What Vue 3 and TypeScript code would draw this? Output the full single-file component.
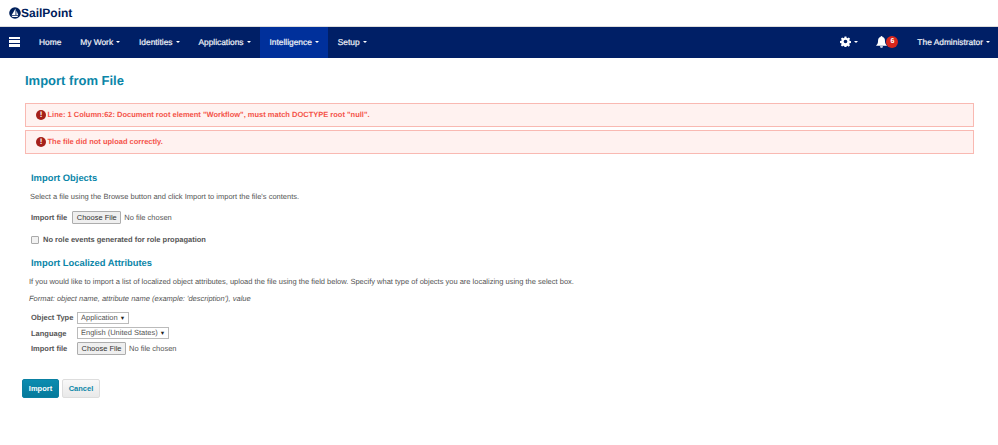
<script setup lang="ts">
interface NavItem { label: string; caret: boolean; active?: boolean }
const nav: NavItem[] = [
  { label: 'Home', caret: false },
  { label: 'My Work', caret: true },
  { label: 'Identities', caret: true },
  { label: 'Applications', caret: true },
  { label: 'Intelligence', caret: true, active: true },
  { label: 'Setup', caret: true },
]
</script>

<template>
  <div class="page">
    <header class="brand">
      <svg class="logo" width="12" height="12" viewBox="0 0 14 14">
        <circle cx="7" cy="7" r="6.800" fill="#00205b" />
        <path d="M7.600 1.800 L7.600 9.400 L3.200 9.400 Z" fill="#fff" />
        <path d="M8.600 4 L10.800 9.400 L8.600 9.400 Z" fill="#fff" />
        <path d="M2.800 10.200 H11 L9.600 11.600 H4 Z" fill="#fff" />
      </svg>
      <span class="brand-name">SailPoint</span>
    </header>
    <nav class="nav">
      <span class="burger"><i></i><i></i><i></i></span>
      <a v-for="n in nav" :key="n.label" class="nav-item" :class="{ active: n.active }">
        {{ n.label }}<b v-if="n.caret" class="caret"></b>
      </a>
      <span class="spacer"></span>
      <span class="gear">
        <svg width="11" height="11" viewBox="0 0 24 24"><path fill="#fff" d="M10 1h4l.6 3.200 1.900.8 2.700-1.800 2.800 2.800-1.800 2.700.8 1.900 3 .6v4l-3.200.6-.8 1.900 1.800 2.700-2.800 2.800-2.700-1.800-1.900.8-.6 3h-4l-.6-3.200-1.900-.8-2.700 1.800-2.800-2.800 1.800-2.700-.8-1.900-3-.6v-4l3.200-.6.8-1.900-1.800-2.700 2.800-2.800 2.700 1.800 1.900-.8zM12 8a4 4 0 1 0 0 8 4 4 0 0 0 0-8z"/></svg>
        <b class="caret"></b>
      </span>
      <span class="bell">
        <svg width="11" height="12" viewBox="0 0 22 24"><path fill="#fff" d="M11 0a2 2 0 0 1 2 2c4 1 5 4 5 9 0 4 2 6 4 8.500H0c2-2.500 4-4.500 4-8.500 0-5 1-8 5-9a2 2 0 0 1 2-2zM8 20.500h6a3 3 0 0 1-6 0z"/></svg>
        <span class="badge">6</span>
      </span>
      <a class="nav-item user">The Administrator<b class="caret"></b></a>
    </nav>

    <main class="content">
      <h1>Import from File</h1>
      <div class="alert first"><span class="err">!</span>Line: 1 Column:62: Document root element "Workflow", must match DOCTYPE root "null".</div>
      <div class="alert"><span class="err">!</span>The file did not upload correctly.</div>

      <section class="objects">
        <h2>Import Objects</h2>
        <p class="help">Select a file using the Browse button and click Import to import the file's contents.</p>
        <div class="row file-row">
          <label class="lbl">Import file</label>
          <span class="file"><button type="button" class="choose">Choose File</button><span>No file chosen</span></span>
        </div>
        <div class="check-row">
          <span class="check"></span>
          <label>No role events generated for role propagation</label>
        </div>
      </section>

      <section class="localized">
        <h2>Import Localized Attributes</h2>
        <p class="help">If you would like to import a list of localized object attributes, upload the file using the field below. Specify what type of objects you are localizing using the select box.</p>
        <p class="help format">Format: object name, attribute name (example: 'description'), value</p>
        <div class="grid">
          <label class="lbl">Object Type</label>
          <span class="select">Application <small>▼</small></span>
          <label class="lbl">Language</label>
          <span class="select">English (United States) <small>▼</small></span>
          <label class="lbl">Import file</label>
          <span class="file"><button type="button" class="choose">Choose File</button><span>No file chosen</span></span>
        </div>
      </section>

      <div class="actions">
        <button type="button" class="btn primary">Import</button>
        <button type="button" class="btn">Cancel</button>
      </div>
    </main>
  </div>
</template>

<style scoped>
.page { width: 998px; height: 445px; overflow: hidden; background: #fff; font-family: "Liberation Sans", Arial, sans-serif; font-size: 7.500px; color: #555; text-rendering: geometricPrecision; }
.brand { height: 26px; display: flex; align-items: center; padding-left: 9px; border-bottom: 1px solid #ddd; box-sizing: content-box; }
.brand-name { font-size: 12px; font-weight: 700; color: #00205b; }
.nav { height: 31px; background: #001f66; display: flex; align-items: stretch; color: #fff; }
.burger { width: 39px; display: flex; flex-direction: column; justify-content: center; gap: 1.250px; padding: 0 0 2px 9px; box-sizing: border-box; }
.burger i { display: block; width: 11px; height: 2.500px; background: #fff; }
.nav-item { display: flex; align-items: center; padding: 0 9.450px 2px; font-size: 8.400px; -webkit-text-stroke: .2px #f0f3f8; color: #f0f3f8; }
.nav-item:first-of-type { padding-left: 0; }
.nav-item.active { background: #00309b; }
.caret { display: inline-block; margin-left: 3px; border-top: 2.500px solid #fff; border-left: 2.500px solid transparent; border-right: 2.500px solid transparent; }
.spacer { flex: 1; }
.gear { display: flex; align-items: center; margin-right: 18px; padding-bottom: 2px; }
.bell { display: flex; align-items: center; margin-right: 19px; padding-bottom: 2px; }
.badge { width: 12px; height: 12px; border-radius: 50%; background: #d9261c; font-size: 7px; font-weight: 700; text-align: center; line-height: 12px; margin-left: -1px; }
.nav-item.user { padding: 0 8px 2px 0; }
.content { padding: 0 24px 0 25px; }
h1 { margin: 15px 0 15px; font-size: 13px; line-height: 15px; font-weight: 700; color: #0b86a8; }
.alert { height: 24px; box-sizing: border-box; border: 1px solid #f9b9b2; background: #fff2f0; color: #f4544a; font-weight: 700; font-size: 7.500px; display: flex; align-items: center; padding: 0 0 1px 10px; margin-bottom: 3px; }
.err { width: 10px; height: 10px; border-radius: 50%; background: #a5201a; color: #fff; font-size: 8px; line-height: 10px; text-align: center; margin-right: 1.500px; }
h2 { margin: 0; font-size: 9.400px; line-height: 12px; font-weight: 700; color: #0b86a8; padding-left: 6px; }
.objects { margin-top: 18px; }
.help { margin: 8px 0 0 5px; font-size: 7.500px; line-height: 10px; color: #555; }
.row { display: flex; align-items: center; }
.file-row { margin-top: 9px; padding-left: 6px; }
.lbl { font-weight: 700; color: #555; font-size: 7.500px; white-space: nowrap; }
.file { display: inline-flex; align-items: center; gap: 3px; font-size: 7.500px; color: #555; }
.file-row .file { margin-left: 5px; }
.choose { height: 13px; width: 49px; padding: 0; border: 1px solid #adadad; border-radius: 1px; background: #efefef; font: 7.500px "Liberation Sans", Arial, sans-serif; color: #333; }
.check-row { display: flex; align-items: center; margin-top: 11px; padding-left: 6px; font-weight: 700; font-size: 7.500px; }
.check { width: 6px; height: 6px; border: 1px solid #aaa; border-radius: 1px; background: #f2f2f2; margin-right: 4px; }
.localized { margin-top: 13px; }
.localized .help { margin-left: 4px; }
.format { font-style: italic; margin-top: 7px !important; }
.grid { display: grid; grid-template-columns: 46px max-content; grid-auto-rows: 15.500px; justify-content: start; align-items: center; margin-top: 6px; padding-left: 6px; }
.select { display: inline-block; justify-self: start; height: 10px; line-height: 10px; border: 1px solid #bbb; padding: 0 3px; font-size: 7.500px; color: #555; box-sizing: content-box; white-space: nowrap; }
.select small { font-size: 5.500px; color: #222; }
.actions { display: flex; gap: 3px; margin-top: 22px; margin-left: -3px; }
.btn { width: 38px; height: 19px; padding: 0; box-sizing: border-box; border: 1px solid #ddd; border-radius: 2px; background: linear-gradient(#f8f8f8, #e9e9e9); color: #0b86a8; font: 700 7.500px "Liberation Sans", Arial, sans-serif; }
.btn.primary { background: linear-gradient(#0a8cb0, #067a9b); border-color: #0a80a2; color: #fff; width: 37px; }
</style>

<style>
html, body { margin: 0; background: #fff; }
</style>
